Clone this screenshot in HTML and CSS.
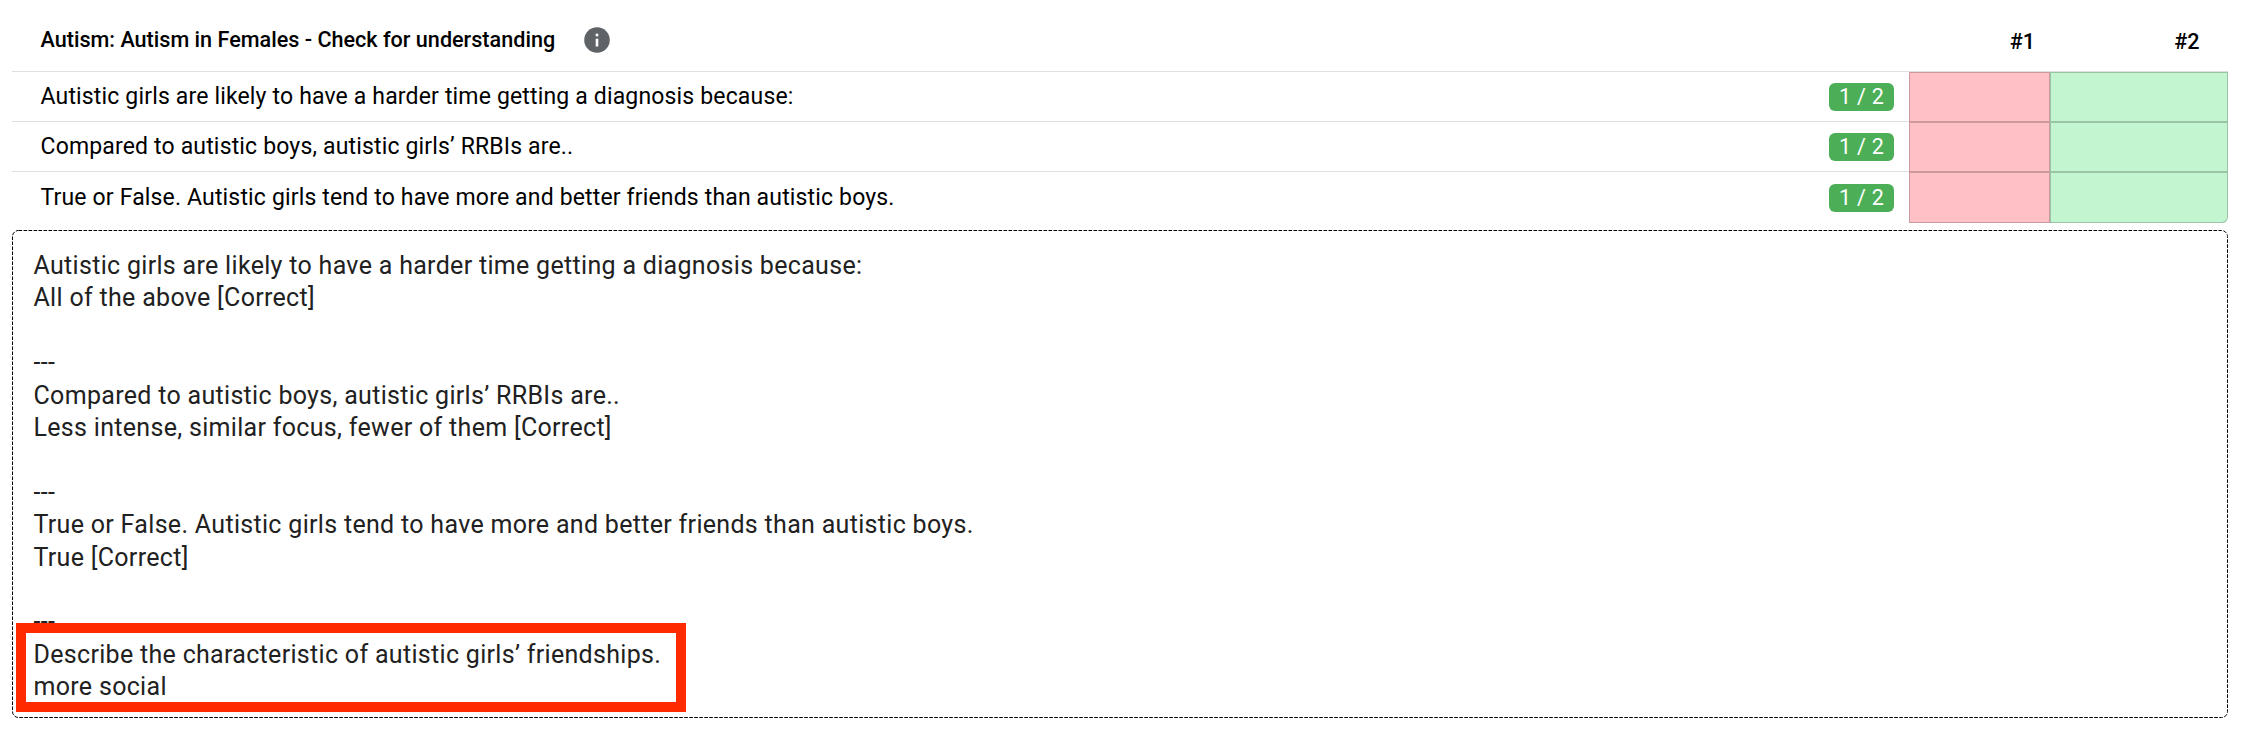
FILE: index.html
```html
<!DOCTYPE html>
<html lang="en">
<head>
    <meta charset="UTF-8">
    <meta name="viewport" content="width=device-width, initial-scale=1.0">
    <title>Check for understanding</title>
    <link rel="stylesheet" href="styles.css">
</head>

<body>
    <section class="results">
        <div class="row head">
            <div class="title">
                <span>Autism: Autism in Females - Check for understanding</span>
                <svg class="info" viewBox="0 0 26 26">
                    <circle cx="13" cy="13" r="12.8" fill="#5f6368"/>
                    <rect x="11.7" y="6.7" width="2.6" height="2.6" fill="#fff"/>
                    <rect x="11.7" y="11.7" width="2.6" height="7.8" fill="#fff"/>
                </svg>
            </div>
            <div class="num num1">#1</div>
            <div class="num num2">#2</div>
        </div>
        <div class="row">
            <div class="question"><span>Autistic girls are likely to have a harder time getting a diagnosis because:</span><span class="score">1 / 2</span></div>
            <div class="cell wrong"></div>
            <div class="cell right"></div>
        </div>
        <div class="row">
            <div class="question"><span>Compared to autistic boys, autistic girls’ RRBIs are..</span><span class="score">1 / 2</span></div>
            <div class="cell wrong"></div>
            <div class="cell right"></div>
        </div>
        <div class="row last">
            <div class="question"><span>True or False. Autistic girls tend to have more and better friends than autistic boys.</span><span class="score">1 / 2</span></div>
            <div class="cell wrong"></div>
            <div class="cell right"></div>
        </div>
    </section>

    <section class="answers">
        <svg class="outline" viewBox="0 0 2216 488">
            <rect x="0.5" y="0.5" width="2215" height="487" rx="6" fill="none" stroke="#000" stroke-dasharray="3.6 1.4"/>
        </svg>
        <p>Autistic girls are likely to have a harder time getting a diagnosis because:<br>All of the above [Correct]</p>
        <p>---<br>Compared to autistic boys, autistic girls’ RRBIs are..<br>Less intense, similar focus, fewer of them [Correct]</p>
        <p>---<br>True or False. Autistic girls tend to have more and better friends than autistic boys.<br>True [Correct]</p>
        <p>---<br>Describe the characteristic of autistic girls’ friendships.<br>more social</p>
        <div class="highlight"></div>
    </section>
</body>
</html>
```
FILE: styles.css
```css
* {
  box-sizing: border-box;
}
body {
  margin: 0;
  padding: 0 16px 0 12px;
  background-color: #fff;
  color: #000;
  font-family: Roboto, "Liberation Sans", sans-serif;
}

/* Score table */
.row {
  display: grid;
  grid-template-columns: 1fr 141px 178px;
  height: 50px;
}
.head {
  height: 72px;
  border-bottom: 1px solid #e0e0e0;
  font-size: 21.6px;
  font-weight: 500;
}
.title {
  display: flex;
  align-items: center;
  padding: 8px 0 0 28.5px;
}
.info {
  width: 26px;
  height: 26px;
  margin: 1px 0 0 29px;
}
.num {
  padding-top: 29px;
  line-height: 26px;
  text-align: right;
}
.num1 {
  padding-right: 15px;
}
.num2 {
  padding-right: 28.5px;
}
.question {
  display: flex;
  align-items: center;
  justify-content: space-between;
  padding: 0 15px 0 28.5px;
  border-bottom: 1px solid #e0e0e0;
  font-size: 23px;
  letter-spacing: 0.16px;
}
.score {
  width: 65px;
  height: 28px;
  border-radius: 6px;
  background-color: #4caf57;
  color: #fff;
  font-size: 21.5px;
  letter-spacing: 0.3px;
  line-height: 28px;
  text-align: center;
}
.cell {
  border: 1px solid rgba(0, 0, 0, 0.2);
}
.wrong {
  background-color: #ffc0c6;
}
.right {
  background-color: #c2f5d0;
}
.last {
  height: 51px;
}
.last .question {
  border-bottom: none;
}
.last .right {
  border-bottom-right-radius: 6px;
}

/* Answer summary */
.answers {
  position: relative;
  height: 488px;
  margin-top: 7px;
  padding: 20px 21.5px 0;
  color: #212121;
  font-size: 25px;
  letter-spacing: 0.31px;
  line-height: 32.4px;
}
.answers p {
  margin: 0 0 32.4px;
}
/* dashed frame round the answers */
.outline {
  position: absolute;
  left: 0;
  top: 0;
  width: 2216px;
  height: 488px;
}
.highlight {
  position: absolute;
  left: 4px;
  top: 393px;
  width: 670px;
  height: 89px;
  border: 10px solid #ff2a00;
}
```
